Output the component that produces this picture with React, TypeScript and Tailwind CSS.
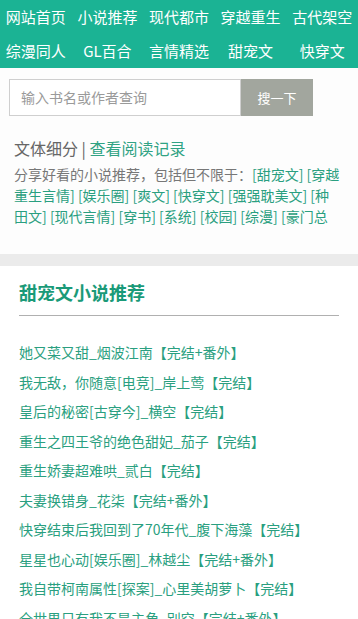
import React from "react";

const navRow1 = ["网站首页", "小说推荐", "现代都市", "穿越重生", "古代架空"];
const navRow2 = ["综漫同人", "GL百合", "言情精选", "甜宠文", "快穿文"];

const G = "text-[#2a9f80]";

const books = [
  "她又菜又甜_烟波江南【完结+番外】",
  "我无敌，你随意[电竞]_岸上莺【完结】",
  "皇后的秘密[古穿今]_横空【完结】",
  "重生之四王爷的绝色甜妃_茄子【完结】",
  "重生娇妻超难哄_贰白【完结】",
  "夫妻换错身_花柒【完结+番外】",
  "快穿结束后我回到了70年代_腹下海藻【完结】",
  "星星也心动[娱乐圈]_林越尘【完结+番外】",
  "我自带柯南属性[探案]_心里美胡萝卜【完结】",
  "全世界只有我不是主角_别空【完结+番外】",
];

export default function App() {
  return (
    <div
      className="w-[358px] h-[619px] overflow-hidden bg-white"
      style={{ fontFamily: '"Noto Sans CJK SC", "Noto Sans", sans-serif' }}
    >
      <nav className="bg-[#1bb394] grid grid-cols-5">
        {[...navRow1, ...navRow2].map((t) => (
          <a
            key={t}
            className="h-[34px] flex items-center justify-center whitespace-nowrap text-[15px] text-white"
          >
            {t}
          </a>
        ))}
      </nav>

      <section className="px-[9px] pt-[11px] pb-[27px] bg-[#fdfdfd]">
        <div className="flex">
          <div className="w-[232px] h-[37px] border border-[#cfcfcf] bg-white flex items-center pl-[11px] text-[14px] text-[#9a9a9a]">
            输入书名或作者查询
          </div>
          <button className="w-[72px] h-[37px] bg-[#a2a69e] text-white text-[13px]">
            搜一下
          </button>
        </div>
        <div className="px-[5px]">
          <div className="mt-[20px] text-[16px] leading-[24px] text-[#666]">
            文体细分 | <span className="text-[#30a384]">查看阅读记录</span>
          </div>
          <div className="mt-[4px] text-[14px] leading-[21px] text-[#777] whitespace-nowrap">
            <div>
              分享好看的小说推荐，包括但不限于：<a className={G}>[甜宠文]</a>{" "}
              <a className={G}>[穿越</a>
            </div>
            <div>
              <a className={G}>重生言情]</a> <a className={G}>[娱乐圈]</a>{" "}
              <a className={G}>[爽文]</a> <a className={G}>[快穿文]</a>{" "}
              <a className={G}>[强强耽美文]</a> <a className={G}>[种</a>
            </div>
            <div>
              <a className={G}>田文]</a> <a className={G}>[现代言情]</a>{" "}
              <a className={G}>[穿书]</a> <a className={G}>[系统]</a>{" "}
              <a className={G}>[校园]</a> <a className={G}>[综漫]</a>{" "}
              <a className={G}>[豪门总</a>
            </div>
          </div>
        </div>
      </section>

      <div className="h-[12px] bg-[#ebebeb]" />

      <section className="px-[19px] pt-[13px]">
        <h2 className="text-[18px] leading-[26px] font-bold text-[#1a9a78]">
          甜宠文小说推荐
        </h2>
        <div className="mt-[10px] border-t border-[#b0b0b0]" />
        <ul className="mt-[22px]">
          {books.map((b) => (
            <li
              key={b}
              className="h-[29.5px] leading-[29.5px] text-[14px] text-[#2a9f80] whitespace-nowrap"
            >
              {b}
            </li>
          ))}
        </ul>
      </section>
    </div>
  );
}
